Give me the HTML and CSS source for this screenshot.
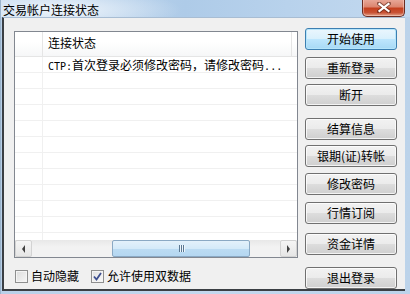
FILE: index.html
```html
<!DOCTYPE html>
<html lang="zh-CN">
<head>
<meta charset="utf-8">
<title>交易帐户连接状态</title>
<link rel="stylesheet" href="styles.css">
</head>
<body>
<div class="window">
  <div class="titlebar">
    <span class="title">交易帐户连接状态</span>
    <div class="close">
      <svg width="14" height="11" viewBox="0 0 14 11">
        <path d="M2 1.5 L12 9.5 M12 1.5 L2 9.5" stroke="#4a1a10" stroke-width="4" stroke-linecap="square" opacity="0.55"/>
        <path d="M2.5 2 L11.5 9 M11.5 2 L2.5 9" stroke="#ffffff" stroke-width="2.2" stroke-linecap="square"/>
      </svg>
    </div>
  </div>
  <div class="client">
    <div class="leftcol">
      <div class="listview">
        <div class="lv-header">
          <div class="hcell h1"></div>
          <div class="hcell h2">连接状态</div>
          <div class="hcell h3"></div>
        </div>
        <div class="lv-body">
          <div class="row"><div class="cell c1"></div><div class="cell c2"><span class="asc">CTP:</span>首次登录必须修改密码，请修改密码<span class="asc">...</span></div></div>
        </div>
        <div class="hscroll">
          <div class="sb-btn"><span class="tri-left"></span></div>
          <div class="sb-track">
            <div class="sb-thumb"><span class="grip"></span><span class="grip"></span><span class="grip"></span></div>
          </div>
          <div class="sb-btn"><span class="tri-right"></span></div>
        </div>
      </div>
      <div class="checks">
        <label class="check"><span class="box"></span><span class="lbl">自动隐藏</span></label>
        <label class="check"><span class="box checked"><svg width="9" height="9" viewBox="0 0 9 9"><path d="M1 4.5 L3.5 7.5 L8 1" stroke="#3d4f8f" stroke-width="1.8" fill="none"/></svg></span><span class="lbl">允许使用双数据</span></label>
      </div>
    </div>
    <div class="buttons">
      <div class="btn default">开始使用</div>
      <div class="btn mt7">重新登录</div>
      <div class="btn mt5">断开</div>
      <div class="btn mt13">结算信息</div>
      <div class="btn mt5">银期(证)转帐</div>
      <div class="btn mt6">修改密码</div>
      <div class="btn mt7">行情订阅</div>
      <div class="btn mt9">资金详情</div>
      <div class="btn mt13">退出登录</div>
    </div>
  </div>
</div>
</body>
</html>
```

FILE: styles.css
```css
* { box-sizing: border-box; }
html, body { margin: 0; padding: 0; }
body {
  width: 410px;
  height: 294px;
  overflow: hidden;
  font-family: "Noto Sans CJK SC", "Noto Sans", sans-serif;
  font-size: 12px;
  color: #000;
}
.window {
  width: 410px;
  height: 294px;
  display: flex;
  flex-direction: column;
  background: linear-gradient(to right, #b9d0e8 0%, #c4d8ee 50%, #bcd3ea 100%);
  border-left: 1px solid #9bb4cd;
}
.titlebar {
  height: 22px;
  position: relative;
  background:
    radial-gradient(ellipse 120px 22px at 60px 10px, rgba(240,246,252,0.95), rgba(240,246,252,0) 100%),
    linear-gradient(to right, #c6daef 0%, #aecbe8 45%, #b8d2ec 70%, #c3d9ef 100%);
}
.title {
  position: absolute;
  left: 2px;
  top: 2px;
  line-height: 16px;
  font-size: 12px;
  color: #000;
}
.close {
  position: absolute;
  left: 361px;
  top: -1px;
  width: 43px;
  height: 18px;
  border: 1px solid #6b2d22;
  border-top: none;
  border-radius: 0 0 5px 5px;
  background: linear-gradient(to bottom, #e9ab9c 0%, #dc8670 45%, #c4401f 55%, #c85234 80%, #e2a38a 100%);
  box-shadow: inset 0 0 0 1px rgba(255,220,210,0.45);
  display: flex;
  align-items: center;
  justify-content: center;
}
.client {
  flex: 1;
  margin: 0 5px 3px 1px;
  background: #f0f0f0;
  border-left: 2px solid #3b3f44;
  border-bottom: 2px solid #3b3f44;
  border-top: 1px solid #a8bdd3;
  display: flex;
}
.leftcol {
  padding: 13px 0 0 10px;
  width: 294px;
}
.listview {
  width: 284px;
  height: 227px;
  border: 1px solid #828790;
  background: #fff;
  display: flex;
  flex-direction: column;
}
.lv-header {
  height: 25px;
  display: flex;
  border-bottom: 1px solid #e5e5e5;
  background: linear-gradient(to bottom, #ffffff 0%, #ffffff 40%, #f6f7f8 100%);
}
.hcell {
  line-height: 22px;
  padding-left: 5px;
}
.h1 { width: 28px; border-right: 1px solid #e5e5e5; }
.h2 { width: 250px; border-right: 1px solid #e5e5e5; }
.h3 { flex: 1; }
.lv-body {
  flex: 1;
  background:
    linear-gradient(to right, transparent 27px, #f0f0f0 27px, #f0f0f0 28px, transparent 28px),
    repeating-linear-gradient(to bottom, transparent 0, transparent 15px, #f0f0f0 15px, #f0f0f0 16px);
}
.row {
  display: flex;
  height: 16px;
  line-height: 15px;
}
.cell.c1 { width: 28px; }
.cell.c2 { padding-left: 5px; white-space: nowrap; }
.asc {
  font-family: "DejaVu Sans Mono", "Liberation Mono", monospace;
  font-size: 10px;
}
.hscroll {
  height: 17px;
  display: flex;
  background: linear-gradient(to right, #e3e3e3, #ececec 2px, #f0f0f0);
}
.sb-btn {
  width: 17px;
  height: 17px;
  border: 1px solid #d3d3d3;
  border-radius: 2px;
  background: linear-gradient(to bottom, #f5f5f5, #e6e6e6);
  display: flex;
  align-items: center;
  justify-content: center;
}
.tri-left {
  width: 0; height: 0;
  border-top: 4px solid transparent;
  border-bottom: 4px solid transparent;
  border-right: 3px solid #404040;
}
.tri-right {
  width: 0; height: 0;
  border-top: 4px solid transparent;
  border-bottom: 4px solid transparent;
  border-left: 3px solid #404040;
}
.sb-track {
  flex: 1;
  display: flex;
  padding-left: 80px;
  background: linear-gradient(to bottom, #e8e8e8, #f2f2f2 40%, #f2f2f2);
}
.sb-thumb {
  width: 138px;
  height: 17px;
  border: 1px solid #8aa9c4;
  border-radius: 2px;
  background: linear-gradient(to bottom, #e3f1fb 0%, #d4eaf9 50%, #bcdcf3 51%, #b5d7f1 100%);
  display: flex;
  align-items: center;
  justify-content: center;
  gap: 1px;
}
.grip {
  width: 1px;
  height: 7px;
  background: #5b7892;
  box-shadow: 1px 0 0 #eef6fc;
}
.checks {
  display: flex;
  align-items: center;
  margin-top: 11px;
  padding-left: 1px;
  height: 14px;
}
.check {
  display: flex;
  align-items: center;
  line-height: 14px;
}
.check + .check { margin-left: 12px; }
.box {
  width: 13px;
  height: 13px;
  border: 1px solid #8e8f8f;
  background: linear-gradient(135deg, #dcdcdc, #f6f6f6);
  box-shadow: inset 0 0 0 1px #f4f4f4;
  display: flex;
  align-items: center;
  justify-content: center;
  margin-right: 3px;
}
.box.checked { background: linear-gradient(135deg, #e0e0e0, #fafafa); }
.lbl { white-space: nowrap; }
.buttons {
  padding-top: 10px;
  margin-left: 7px;
  width: 92px;
  display: flex;
  flex-direction: column;
}
.btn {
  height: 22px;
  width: 92px;
  border: 1px solid #707070;
  border-radius: 3px;
  background: linear-gradient(to bottom, #f2f2f2 0%, #ebebeb 50%, #dddddd 51%, #cfcfcf 100%);
  box-shadow: inset 0 0 0 1px rgba(255,255,255,0.75);
  text-align: center;
  line-height: 20px;
  white-space: nowrap;
}
.btn.default {
  border-color: #3c7fb1;
  background: linear-gradient(to bottom, #eaf6fd 0%, #d9f0fc 50%, #bee6fd 51%, #a7d9f5 100%);
  box-shadow: inset 0 0 0 1px #b6e5fb;
}
.mt5 { margin-top: 5px; }
.mt6 { margin-top: 6px; }
.mt7 { margin-top: 7px; }
.mt9 { margin-top: 9px; }
.mt13 { margin-top: 12px; }
```
